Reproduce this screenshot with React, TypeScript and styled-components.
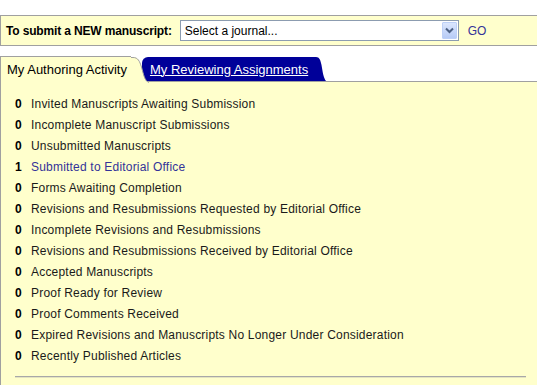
import React from "react";
import styled, { createGlobalStyle } from "styled-components";

const GlobalStyle = createGlobalStyle`
  html, body {
    margin: 0;
    padding: 0;
    background: #ffffff;
  }
  body {
    font-family: "Liberation Sans", Arial, sans-serif;
    color: #000000;
    overflow: hidden;
  }
`;

const YELLOW = "#ffffcc";
const BORDER = "#a0a0a0";
const NAVY = "#000099";
const LINK = "#333399";

const Page = styled.div`
  padding-top: 15px;
`;

const TopBar = styled.div`
  display: flex;
  align-items: center;
  height: 29px;
  border: 1px solid ${BORDER};
  border-right: none;
  background: ${YELLOW};
  padding-left: 5px;
`;

const Label = styled.span`
  font-size: 12px;
  font-weight: bold;
  margin-right: 8px;
  letter-spacing: -0.15px;
`;

const SelectBox = styled.div`
  box-sizing: border-box;
  display: flex;
  align-items: center;
  width: 279px;
  height: 21px;
  border: 1px solid #8c9cb0;
  background: #ffffff;
  padding-left: 4px;
  font-size: 12px;
`;

const SelectText = styled.span`
  flex: 1;
`;

const ArrowButton = styled.span`
  box-sizing: border-box;
  display: flex;
  align-items: center;
  justify-content: center;
  width: 15px;
  height: 17px;
  margin-right: 1px;
  border: 1px solid #bdd0f7;
  border-radius: 1px;
  background: linear-gradient(#dbe6fd, #b7cbf6);
`;

const Go = styled.span`
  margin-left: 9px;
  font-size: 12px;
  color: ${LINK};
`;

const TabRow = styled.div`
  display: flex;
  align-items: flex-end;
  height: 25px;
  margin-top: 10px;
  border-bottom: 1px solid ${BORDER};
`;

const ActiveTab = styled.div`
  position: relative;
  z-index: 2;
  box-sizing: border-box;
  display: flex;
  align-items: center;
  height: 26px;
  margin-bottom: -1px;
  padding: 0 4px 0 6px;
  border-top: 1px solid ${BORDER};
  border-left: 1px solid ${BORDER};
  background: ${YELLOW};
  font-size: 13px;
  color: #000000;
`;

const InactiveTab = styled.div`
  position: relative;
  z-index: 1;
  box-sizing: border-box;
  display: flex;
  align-items: center;
  height: 24px;
  margin-left: 11px;
  padding: 0 8px 0 8px;
  border-top-left-radius: 6px;
  background: ${NAVY};
  font-size: 13px;
  color: #ffffff;
  text-decoration: underline;
`;

const Ear = styled.svg`
  position: absolute;
  left: 100%;
  top: 0;
  overflow: visible;
`;

const Panel = styled.div`
  box-sizing: border-box;
  min-height: calc(100vh - 82px);
  background: ${YELLOW};
  border-left: 1px solid ${BORDER};
  padding-top: 12px;
`;

const List = styled.div`
  display: flex;
  flex-direction: column;
`;

const Row = styled.div<{ $link?: boolean }>`
  display: flex;
  padding-left: 14px;
  line-height: 21px;
  font-size: 12px;
  letter-spacing: 0.2px;
  color: ${(p) => (p.$link ? LINK : "#1a1a1a")};
`;

const Count = styled.span`
  width: 16px;
  font-weight: bold;
  letter-spacing: 0;
  color: #000000;
`;

const Divider = styled.div`
  height: 0;
  margin: 9px 11px 0 14px;
  border-top: 1px solid #a8a8a8;
  border-bottom: 1px solid #e4e4c0;
`;

const items: { n: number; label: string; link?: boolean }[] = [
  { n: 0, label: "Invited Manuscripts Awaiting Submission" },
  { n: 0, label: "Incomplete Manuscript Submissions" },
  { n: 0, label: "Unsubmitted Manuscripts" },
  { n: 1, label: "Submitted to Editorial Office", link: true },
  { n: 0, label: "Forms Awaiting Completion" },
  { n: 0, label: "Revisions and Resubmissions Requested by Editorial Office" },
  { n: 0, label: "Incomplete Revisions and Resubmissions" },
  { n: 0, label: "Revisions and Resubmissions Received by Editorial Office" },
  { n: 0, label: "Accepted Manuscripts" },
  { n: 0, label: "Proof Ready for Review" },
  { n: 0, label: "Proof Comments Received" },
  { n: 0, label: "Expired Revisions and Manuscripts No Longer Under Consideration" },
  { n: 0, label: "Recently Published Articles" },
];

export default function App() {
  return (
    <Page>
      <GlobalStyle />
      <TopBar>
        <Label>To submit a NEW manuscript:</Label>
        <SelectBox>
          <SelectText>Select a journal...</SelectText>
          <ArrowButton>
            <svg width="9" height="7" viewBox="0 0 9 7">
              <path d="M1 1.5 L4.5 5 L8 1.5" fill="none" stroke="#4d6185" strokeWidth="2" />
            </svg>
          </ArrowButton>
        </SelectBox>
        <Go>GO</Go>
      </TopBar>
      <TabRow>
        <ActiveTab>
          My Authoring Activity
          <Ear width="18" height="26" viewBox="0 0 18 26">
            <path d="M0 0 H2 C7 0 8.5 4 10.5 10 C12.5 17 13.5 24 18 26 H0 Z" fill={YELLOW} />
            <path d="M0 0.5 H2 C7 0.5 8.5 4 10.5 10 C12.5 17 13.5 24 18 25.5" fill="none" stroke={BORDER} strokeWidth="1" />
          </Ear>
        </ActiveTab>
        <InactiveTab>
          My Reviewing Assignments
          <Ear width="10" height="24" viewBox="0 0 10 24">
            <path d="M0 0 C3.5 0 4.5 3 5.5 8 C6.5 14 7.5 21 10 24 H0 Z" fill={NAVY} />
          </Ear>
        </InactiveTab>
      </TabRow>
      <Panel>
        <List>
          {items.map((it, i) => (
            <Row key={i} $link={it.link}>
              <Count>{it.n}</Count>
              <span>{it.label}</span>
            </Row>
          ))}
        </List>
        <Divider />
      </Panel>
    </Page>
  );
}
